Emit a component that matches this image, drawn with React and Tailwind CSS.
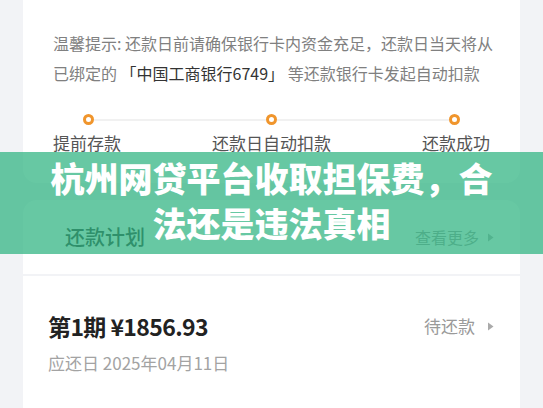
import React from 'react';

const font = { fontFamily: '"Noto Sans CJK SC", "Noto Sans", sans-serif' };

const Arrow = ({ className = '' }) => (
  <svg width="7" height="9" viewBox="0 0 7 9" className={className}>
    <path d="M1 0.5 L6.5 4.5 L1 8.5 Z" fill="currentColor" />
  </svg>
);

const Dot = () => (
  <div className="w-[11px] h-[11px] rounded-full border-[3px] border-[#f0952c] bg-white shrink-0" />
);

export default function App() {
  return (
    <div
      className="relative w-[543px] h-[408px] overflow-hidden bg-[#f2f3f6] px-[23px]"
      style={font}
    >
      {/* Tip card */}
      <div className="bg-white rounded-b-[14px] pt-[28px] pb-[28px] px-[30px]">
        <div className="text-[16px] leading-[30px] text-[#808080] whitespace-nowrap">
          温馨提示: 还款日前请确保银行卡内资金充足，还款日当天将从
        </div>
        <div className="text-[16px] leading-[30px] text-[#808080] whitespace-nowrap">
          已绑定的 <span className="text-[#333]">「中国工商银行6749」</span> 等还款银行卡发起自动扣款
        </div>

        {/* Steps */}
        <div className="flex items-center px-[30px] mt-[26px]">
          <Dot />
          <div className="flex-1 h-[2px] bg-[#f1f1f1]" />
          <Dot />
          <div className="flex-1 h-[2px] bg-[#f1f1f1]" />
          <Dot />
        </div>
        <div className="flex justify-between mt-[6px] text-[17px] leading-[24px] text-[#555]">
          <span>提前存款</span>
          <span>还款日自动扣款</span>
          <span>还款成功</span>
        </div>
      </div>

      {/* Plan card */}
      <div className="mt-[17px] bg-white rounded-t-[14px]">
        <div className="h-[74px] flex items-center justify-between pl-[42px] pr-[26px]">
          <span className="text-[20px] font-medium text-[#222]">还款计划</span>
          <span className="flex items-center gap-[8px] text-[16px] text-[#999]">
            查看更多
            <Arrow className="text-[#aaa]" />
          </span>
        </div>
        <div className="h-[2px] bg-[#f2f3f6]" />
        <div className="pt-[34px] pl-[25px] pr-[26px] h-[160px]">
          <div className="flex items-center justify-between">
            <span className="text-[23px] leading-[32px] font-semibold tracking-[-0.6px] text-[#222]">第1期 ¥1856.93</span>
            <span className="flex items-center gap-[12px] text-[17px] text-[#9a9a9a]">
              待还款
              <Arrow className="text-[#aaa]" />
            </span>
          </div>
          <div className="mt-[9px] text-[17px] leading-[24px] text-[#a3a3a3]">
            应还日 2025年04月11日
          </div>
        </div>
      </div>

      {/* Title banner overlay */}
      <div className="absolute left-0 right-0 top-[152px] h-[102px] bg-[#34b584]/75 flex items-center justify-center pb-[7px]">
        <div className="w-[460px] text-center text-white text-[34px] leading-[45px] font-black">
          杭州网贷平台收取担保费，合法还是违法真相
        </div>
      </div>
    </div>
  );
}
